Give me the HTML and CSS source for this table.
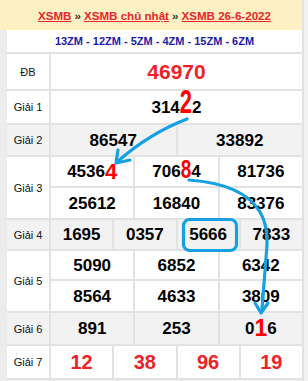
FILE: index.html
```html
<!DOCTYPE html>
<html lang="vi">
<head>
<meta charset="utf-8">
<title>XSMB 26-6-2022</title>
<link rel="stylesheet" href="styles.css">
</head>
<body>
<div class="page">
  <div class="sheet">
    <div class="crumbs">
      <a href="#">XSMB</a><span class="sep">»</span><a href="#">XSMB chủ nhật</a><span class="sep">»</span><a href="#">XSMB 26-6-2022</a>
    </div>
    <div class="board">
      <div class="codes">13ZM - 12ZM - 5ZM - 4ZM - 15ZM - 6ZM</div>

      <div class="row r-db">
        <div class="label">ĐB</div>
        <div class="vals cols-1"><div class="cell special">46970</div></div>
      </div>

      <div class="row r-g1">
        <div class="label">Giải 1</div>
        <div class="vals cols-1"><div class="cell">314<span class="hit hit-2">2</span>2</div></div>
      </div>

      <div class="row r-g2 shade">
        <div class="label">Giải 2</div>
        <div class="vals cols-2">
          <div class="cell">86547</div><div class="cell">33892</div>
        </div>
      </div>

      <div class="row r-g3">
        <div class="label">Giải 3</div>
        <div class="vals cols-3 two-a">
          <div class="cell">4536<span class="hit hit-4">4</span></div>
          <div class="cell">706<span class="hit hit-8">8</span>4</div>
          <div class="cell">81736</div>
          <div class="cell">25612</div>
          <div class="cell">16840</div>
          <div class="cell">83376</div>
        </div>
      </div>

      <div class="row r-g4 shade">
        <div class="label">Giải 4</div>
        <div class="vals cols-4">
          <div class="cell">1695</div><div class="cell">0357</div><div class="cell">5666</div><div class="cell">7833</div>
        </div>
      </div>

      <div class="row r-g5">
        <div class="label">Giải 5</div>
        <div class="vals cols-3 two-b">
          <div class="cell">5090</div>
          <div class="cell">6852</div>
          <div class="cell">6342</div>
          <div class="cell">8564</div>
          <div class="cell">4633</div>
          <div class="cell">3809</div>
        </div>
      </div>

      <div class="row r-g6 shade">
        <div class="label">Giải 6</div>
        <div class="vals cols-3">
          <div class="cell">891</div><div class="cell">253</div><div class="cell">0<span class="hit hit-1">1</span>6</div>
        </div>
      </div>

      <div class="row r-g7">
        <div class="label">Giải 7</div>
        <div class="vals cols-4">
          <div class="cell big-red">12</div><div class="cell big-red">38</div><div class="cell big-red">96</div><div class="cell big-red">19</div>
        </div>
      </div>
    </div>
  </div>

  <svg class="marks" width="308" height="381" viewBox="0 0 308 381" aria-hidden="true">
    <g fill="none" stroke="#14a0e2" stroke-width="3.2" stroke-linecap="round" stroke-linejoin="round">
      <path d="M187 119 Q150 133 117 162"/>
      <path d="M118 150 L116 163 L130 160"/>
      <path d="M189 180 C230 183 250 195 260 212 C266 222 267 232 267 245 L262 309"/>
      <path d="M255 303 L261 313 L268 303"/>
      <rect x="183.5" y="219.5" width="53" height="31" rx="6"/>
    </g>
  </svg>
</div>
</body>
</html>
```

FILE: styles.css
```css
html, body {
  margin: 0;
  padding: 0;
  background: #ffffff;
}

body {
  font-family: "Liberation Sans", Arial, sans-serif;
  color: #000;
}

.page {
  position: relative;
  width: 308px;
  height: 381px;
  overflow: hidden;
  background: #f2f2f2;
  display: flex;
}

.sheet {
  width: 302px;
  border-right: 2px solid #e2e2e2;
  display: flex;
  flex-direction: column;
}

.crumbs {
  height: 30px;
  background: #fdf0c3;
  display: flex;
  align-items: center;
  justify-content: center;
  padding-left: 7px;
  font-size: 11.6px;
  font-weight: bold;
  white-space: nowrap;
}

.crumbs a {
  color: #e8262b;
  text-decoration: underline;
}

.crumbs .sep {
  color: #333;
  margin: 0 3px;
}

.board {
  border-left: 7px solid #ececec;
  background: #e2e2e2;
  display: flex;
  flex-direction: column;
  gap: 2px;
  padding-bottom: 2px;
}

.codes {
  height: 22px;
  background: #fff;
  display: flex;
  align-items: center;
  justify-content: center;
  font-size: 11px;
  font-weight: bold;
  color: #1b1ba8;
}

.row {
  display: grid;
  grid-template-columns: 42px 1fr;
  gap: 2px;
}

.label {
  background: #fff;
  display: flex;
  align-items: center;
  justify-content: center;
  font-size: 11px;
  color: #111;
}

.vals {
  display: grid;
  gap: 2px;
}

.cols-1 { grid-template-columns: 1fr; }
.cols-2 { grid-template-columns: repeat(2, 1fr); }
.cols-3 { grid-template-columns: repeat(3, 1fr); }
.cols-4 { grid-template-columns: repeat(4, 1fr); }

.cell {
  background: #fff;
  display: flex;
  align-items: center;
  justify-content: center;
  font-size: 17px;
  font-weight: bold;
  line-height: 1;
  white-space: nowrap;
}

.shade .label,
.shade .cell {
  background: #f2f2f2;
}

.r-db { height: 35px; }
.r-g1 { height: 32px; }
.r-g2 { height: 30px; }
.r-g3 .two-a { grid-template-rows: 29px 30px; }
.r-g4 { height: 29px; }
.r-g5 .two-b { grid-template-rows: 28px 30px; }
.r-g6 { height: 31px; }
.r-g7 { height: 32px; }

.special {
  font-size: 21px;
  color: #ee2229;
}

.big-red {
  font-size: 20px;
  color: #ee2229;
}

.hit {
  display: inline-block;
  color: #ff0000;
  line-height: 1;
  transform-origin: 50% 90%;
}

.hit-2 {
  font-size: 22px;
  transform: scaleY(1.5);
}

.hit-4 {
  font-size: 22px;
}

.hit-8 {
  font-size: 19px;
  transform: scaleY(1.32);
}

.hit-1 {
  font-size: 23px;
}

.marks {
  position: absolute;
  left: 0;
  top: 0;
  pointer-events: none;
}
```
